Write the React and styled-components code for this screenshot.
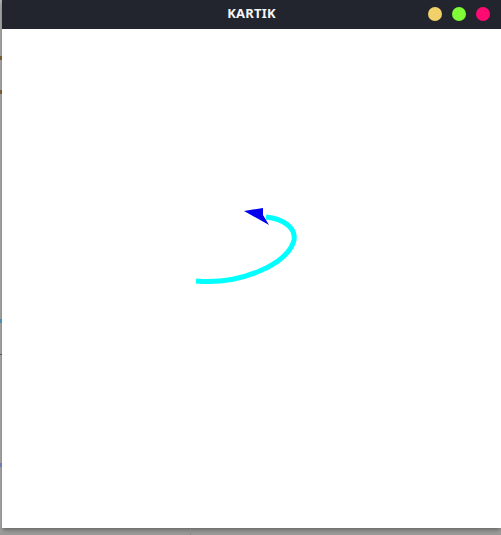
import React from "react";
import styled, { createGlobalStyle } from "styled-components";

const GlobalStyle = createGlobalStyle`
  html, body {
    margin: 0;
    padding: 0;
    background: #b3b3b1;
    overflow: hidden;
  }
`;

const Desktop = styled.div`
  width: 501px;
  height: 535px;
  position: relative;
  background: linear-gradient(to bottom, #b6b6b4 0%, #b6b6b4 98%, #9a9a98 100%);
`;

const Window = styled.div`
  margin-left: 2px;
  width: 499px;
  height: 528px;
  display: flex;
  flex-direction: column;
  background: #ffffff;
  box-shadow: 0 2px 5px rgba(0, 0, 0, 0.45);
`;

const TitleBar = styled.div`
  height: 29px;
  flex-shrink: 0;
  display: grid;
  grid-template-columns: 1fr auto 1fr;
  align-items: center;
  background: #22252e;
  padding: 0 11px 0 0;
`;

const Title = styled.div`
  grid-column: 2;
  color: #f4f6f8;
  font-family: "Noto Sans", "Open Sans", sans-serif;
  font-weight: 700;
  font-size: 13px;
  letter-spacing: 0.2px;
  padding: 0 0 3px 11px;
`;

const Controls = styled.div`
  grid-column: 3;
  justify-self: end;
  display: flex;
  gap: 10px;
  padding-bottom: 1px;
`;

const Dot = styled.span`
  width: 14px;
  height: 14px;
  border-radius: 50%;
  background: ${(props) => props.color};
`;

const Canvas = styled.svg`
  display: block;
  flex: 1;
  width: 499px;
`;

const Speck = styled.span`
  position: absolute;
  left: ${(props) => props.left || 0}px;
  top: ${(props) => props.top}px;
  width: ${(props) => props.w || 2}px;
  height: ${(props) => props.h || 3}px;
  background: ${(props) => props.color};
`;

const App = () => {
  return (
    <Desktop>
      <GlobalStyle />
      <Speck top={56} h={4} color="#7a5a34" />
      <Speck top={90} h={4} color="#7a5a34" />
      <Speck top={319} h={4} color="#4b8fb0" />
      <Speck top={354} h={1} color="#555" />
      <Speck top={463} h={4} color="#6a7fb8" />
      <Speck left={190} top={529} w={1} h={6} color="#8c8c8a" />
      <Window>
        <TitleBar>
          <Title>KARTIK</Title>
          <Controls>
            <Dot color="#f2d16b" />
            <Dot color="#80fb37" />
            <Dot color="#fe0a73" />
          </Controls>
        </TitleBar>
        <Canvas viewBox="2 29 499 499">
          <path
            d="M196 281 C 240 285, 289 264, 294 240 C 296 228, 284 219, 266 217"
            fill="none"
            stroke="#00ffff"
            strokeWidth="5"
          />
          <polygon points="244,211 263,208 263,215 269,225" fill="#0000ee" />
        </Canvas>
      </Window>
    </Desktop>
  );
};

export default App;
